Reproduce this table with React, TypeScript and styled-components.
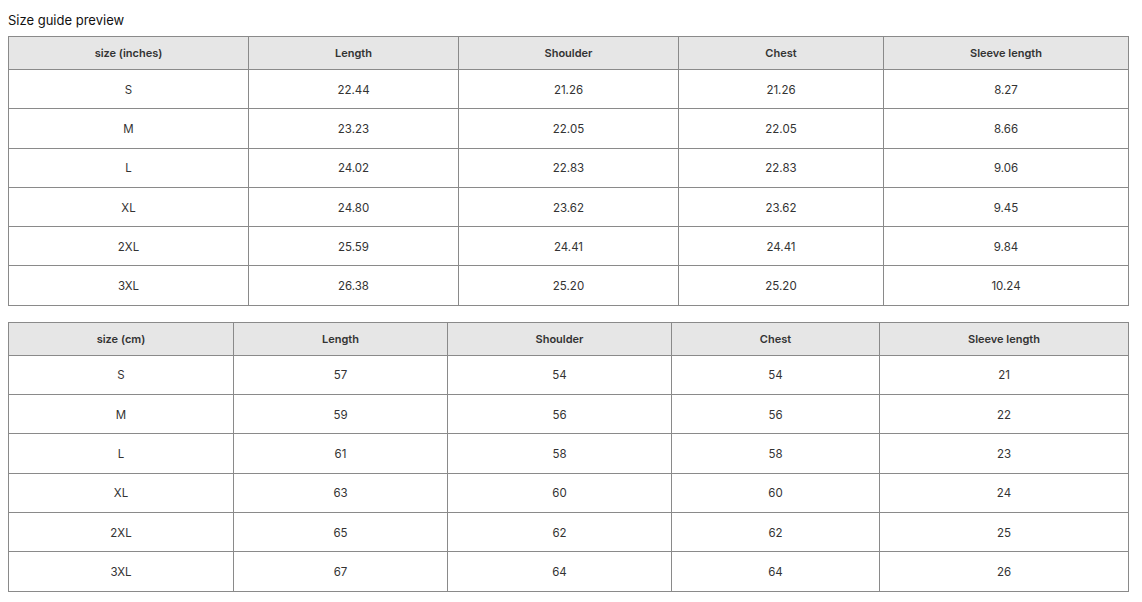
import styled, { createGlobalStyle } from "styled-components";

const GlobalStyle = createGlobalStyle`
  body {
    margin: 0;
    background: #fff;
    font-family: Inter, "Liberation Sans", Arial, sans-serif;
    color: #222;
  }
`;

const Page = styled.div`
  padding: 12px 13px 10px 8px;
`;

const Title = styled.h2`
  margin: 0 0 7px;
  font-size: 13px;
  font-weight: 400;
  line-height: 17px;
  color: #111;
`;

const Table = styled.table`
  width: 100%;
  border-collapse: collapse;
  table-layout: fixed;
  margin-bottom: 16px;
  font-size: 12px;
`;

const Th = styled.th`
  height: 32px;
  padding: 0 8px;
  background: #e6e6e6;
  border: 1px solid #8a8a8a;
  font-size: 11px;
  font-weight: 600;
  color: #333;
  text-align: center;
`;

const Td = styled.td`
  height: 37.3px;
  padding: 1px 8px 0;
  border: 1px solid #8a8a8a;
  font-size: 11.5px;
  color: #333;
  text-align: center;
`;

interface SizeTable {
  label: string;
  widths: number[];
  rows: string[][];
}

const headers = ["Length", "Shoulder", "Chest", "Sleeve length"];

const tables: SizeTable[] = [
  {
    label: "size (inches)",
    widths: [240, 210, 220, 205, 245],
    rows: [
      ["S", "22.44", "21.26", "21.26", "8.27"],
      ["M", "23.23", "22.05", "22.05", "8.66"],
      ["L", "24.02", "22.83", "22.83", "9.06"],
      ["XL", "24.80", "23.62", "23.62", "9.45"],
      ["2XL", "25.59", "24.41", "24.41", "9.84"],
      ["3XL", "26.38", "25.20", "25.20", "10.24"],
    ],
  },
  {
    label: "size (cm)",
    widths: [225, 214, 224, 208, 249],
    rows: [
      ["S", "57", "54", "54", "21"],
      ["M", "59", "56", "56", "22"],
      ["L", "61", "58", "58", "23"],
      ["XL", "63", "60", "60", "24"],
      ["2XL", "65", "62", "62", "25"],
      ["3XL", "67", "64", "64", "26"],
    ],
  },
];

export default function App() {
  return (
    <Page>
      <GlobalStyle />
      <Title>Size guide preview</Title>
      {tables.map((t) => (
        <Table key={t.label}>
          <colgroup>
            {t.widths.map((w, i) => (
              <col key={i} style={{ width: w }} />
            ))}
          </colgroup>
          <thead>
            <tr>
              <Th>{t.label}</Th>
              {headers.map((h) => (
                <Th key={h}>{h}</Th>
              ))}
            </tr>
          </thead>
          <tbody>
            {t.rows.map((row) => (
              <tr key={row[0]}>
                {row.map((cell, i) => (
                  <Td key={i}>{cell}</Td>
                ))}
              </tr>
            ))}
          </tbody>
        </Table>
      ))}
    </Page>
  );
}
